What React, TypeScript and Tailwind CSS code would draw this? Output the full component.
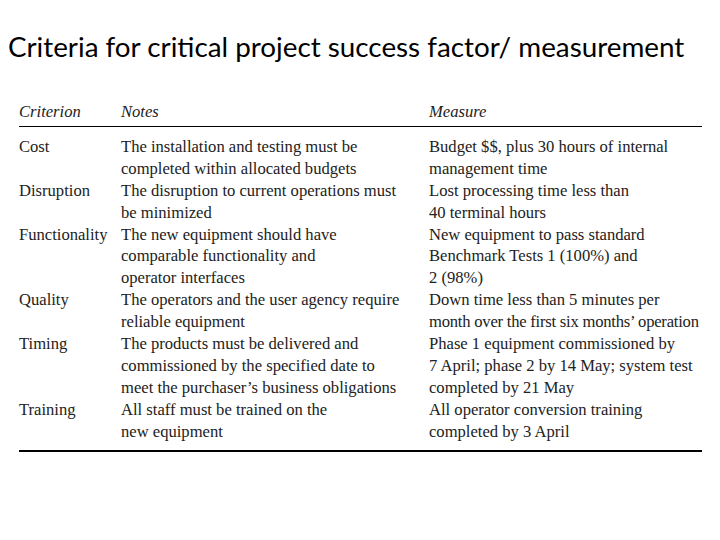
import React from "react";

const rows: { c: string; n: string[]; m: string[] }[] = [
  {
    c: "Cost",
    n: ["The installation and testing must be", "completed within allocated budgets"],
    m: ["Budget $$, plus 30 hours of internal", "management time"],
  },
  {
    c: "Disruption",
    n: ["The disruption to current operations must", "be minimized"],
    m: ["Lost processing time less than", "40 terminal hours"],
  },
  {
    c: "Functionality",
    n: ["The new equipment should have", "comparable functionality and", "operator interfaces"],
    m: ["New equipment to pass standard", "Benchmark Tests 1 (100%) and", "2 (98%)"],
  },
  {
    c: "Quality",
    n: ["The operators and the user agency require", "reliable equipment"],
    m: ["Down time less than 5 minutes per", "month over the first six months\u2019 operation"],
  },
  {
    c: "Timing",
    n: [
      "The products must be delivered and",
      "commissioned by the specified date to",
      "meet the purchaser\u2019s business obligations",
    ],
    m: ["Phase 1 equipment commissioned by", "7 April; phase 2 by 14 May; system test", "completed by 21 May"],
  },
  {
    c: "Training",
    n: ["All staff must be trained on the", "new equipment"],
    m: ["All operator conversion training", "completed by 3 April"],
  },
];

function Lines({ lines }: { lines: string[] }) {
  return (
    <div className="flex flex-col">
      {lines.map((l, i) => (
        <span
          key={i}
          className={
            l.startsWith("month over")
              ? "whitespace-nowrap tracking-[-0.22px]"
              : "whitespace-nowrap"
          }
        >
          {l}
        </span>
      ))}
    </div>
  );
}

export default function App() {
  return (
    <div className="w-[720px] h-[540px] bg-white overflow-hidden">
      <div
        className="pt-[30px] pl-[8px] text-[27.8px] leading-[34px] text-black"
        style={{ fontFamily: "Lato, 'Open Sans', sans-serif" }}
      >
        Criteria for critical project success factor/ measurement
      </div>
      <div
        className="mt-[37px] ml-[19px] w-[683px] text-[16.6px] leading-[21.9px] text-[#222]"
        style={{ fontFamily: "'Liberation Serif', serif" }}
      >
        <div className="grid grid-cols-[102px_308px_1fr] italic pb-[3px] border-b border-black">
          <span>Criterion</span>
          <span>Notes</span>
          <span>Measure</span>
        </div>
        <div className="pt-[9px] pb-[7px] border-b-2 border-black flex flex-col">
          {rows.map((r) => (
            <div key={r.c} className="grid grid-cols-[102px_308px_1fr]">
              <span>{r.c}</span>
              <Lines lines={r.n} />
              <Lines lines={r.m} />
            </div>
          ))}
        </div>
      </div>
    </div>
  );
}
